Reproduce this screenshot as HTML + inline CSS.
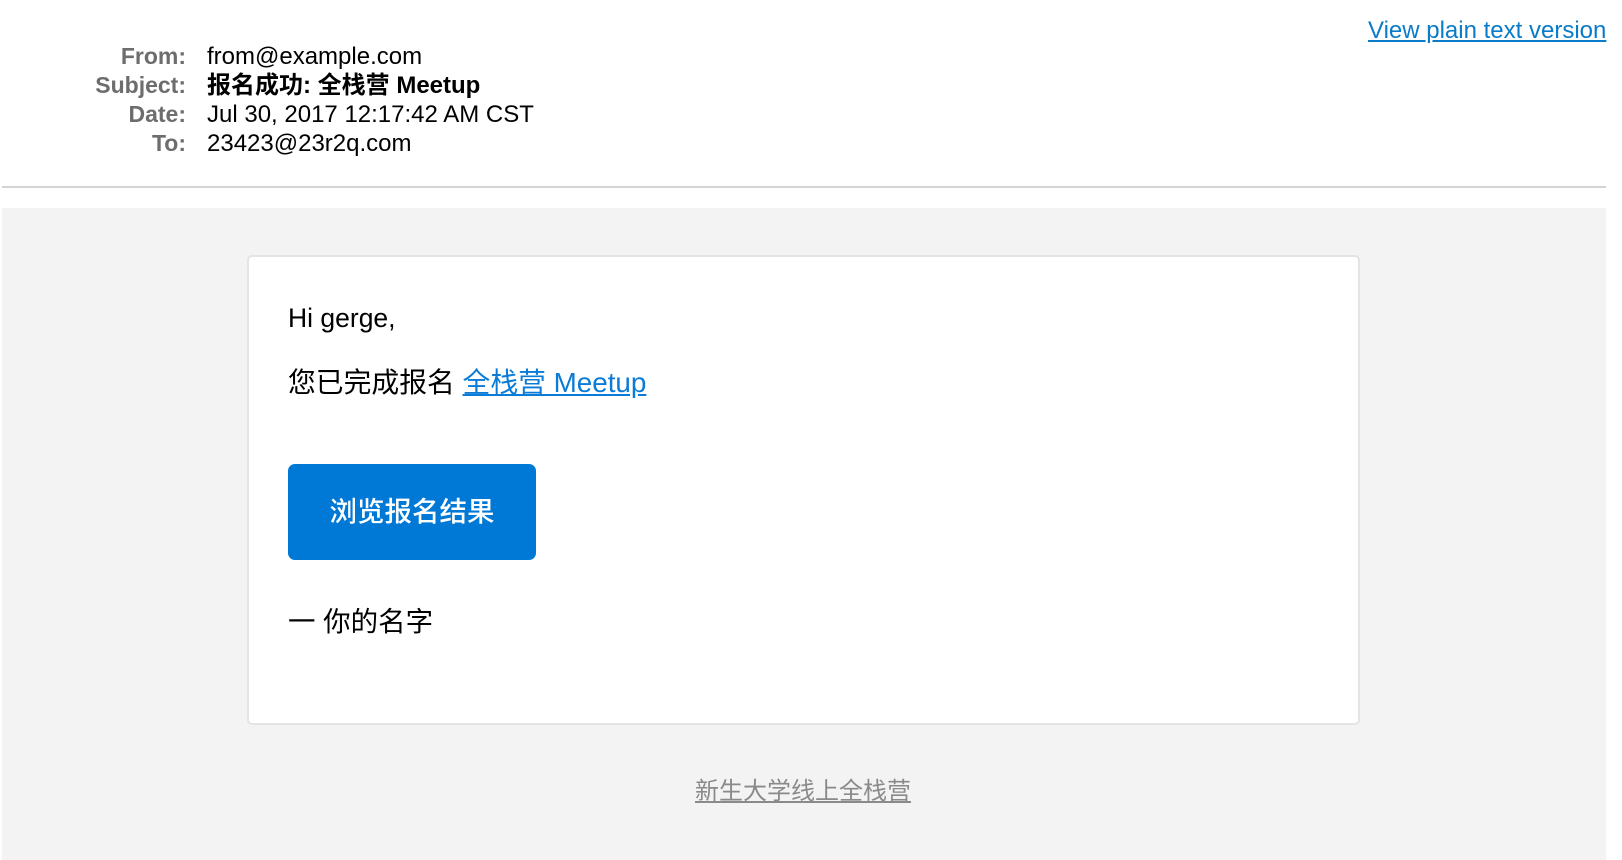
<!DOCTYPE html>
<html><head><meta charset="utf-8"><style>
*{margin:0;padding:0;box-sizing:border-box}
body{width:1622px;height:860px;background:#fff;font-family:"Liberation Sans","Noto Sans CJK SC",sans-serif;position:relative;overflow:hidden}
.a{position:absolute;white-space:nowrap;line-height:28px}
.lbl{color:#6d6d6d;font-weight:bold;font-size:23px;text-align:right;width:162px;left:0}
.val{left:207px;font-size:24px;color:#000}
</style></head><body>
<a class="a" style="left:1368px;top:17px;font-size:24px;color:#0a7bc9;text-decoration:underline">View plain text version</a>
<div class="a lbl" style="top:42px;left:24px">From:</div><div class="a val" style="top:43px">from@example.com</div>
<div class="a lbl" style="top:71px;left:24px">Subject:</div><div class="a val" style="top:72px;font-weight:bold">报名成功: 全栈营 Meetup</div>
<div class="a lbl" style="top:100px;left:24px">Date:</div><div class="a val" style="top:101px">Jul 30, 2017 12:17:42 AM CST</div>
<div class="a lbl" style="top:129px;left:24px">To:</div><div class="a val" style="top:130px">23423@23r2q.com</div>
<div class="a" style="left:2px;top:186px;width:1604px;height:2px;background:#d4d4d4"></div>
<div class="a" style="left:2px;top:208px;width:1604px;height:652px;background:#f3f3f3"></div>
<div class="a" style="left:247px;top:255px;width:1113px;height:470px;background:#fff;border:2px solid #e4e4e4;border-radius:5px"></div>
<div class="a" style="left:288px;top:302px;font-size:26.5px;color:#000;line-height:32px">Hi gerge,</div>
<div class="a" style="left:288px;top:366px;font-size:27.8px;color:#000;line-height:34px">您已完成报名 <a style="color:#0a7bd6;text-decoration:underline">全栈营 Meetup</a></div>
<div class="a" style="left:288px;top:464px;width:248px;height:96px;background:#0079d6;border-radius:7px;color:#fff;font-size:27.5px;line-height:96px;text-align:center;font-weight:500">浏览报名结果</div>
<div class="a" style="left:288px;top:605px;font-size:27.5px;color:#000;line-height:34px">一 你的名字</div>
<a class="a" style="left:695px;top:778px;font-size:24px;color:#8a8a8a;text-decoration:underline">新生大学线上全栈营</a>
</body></html>
